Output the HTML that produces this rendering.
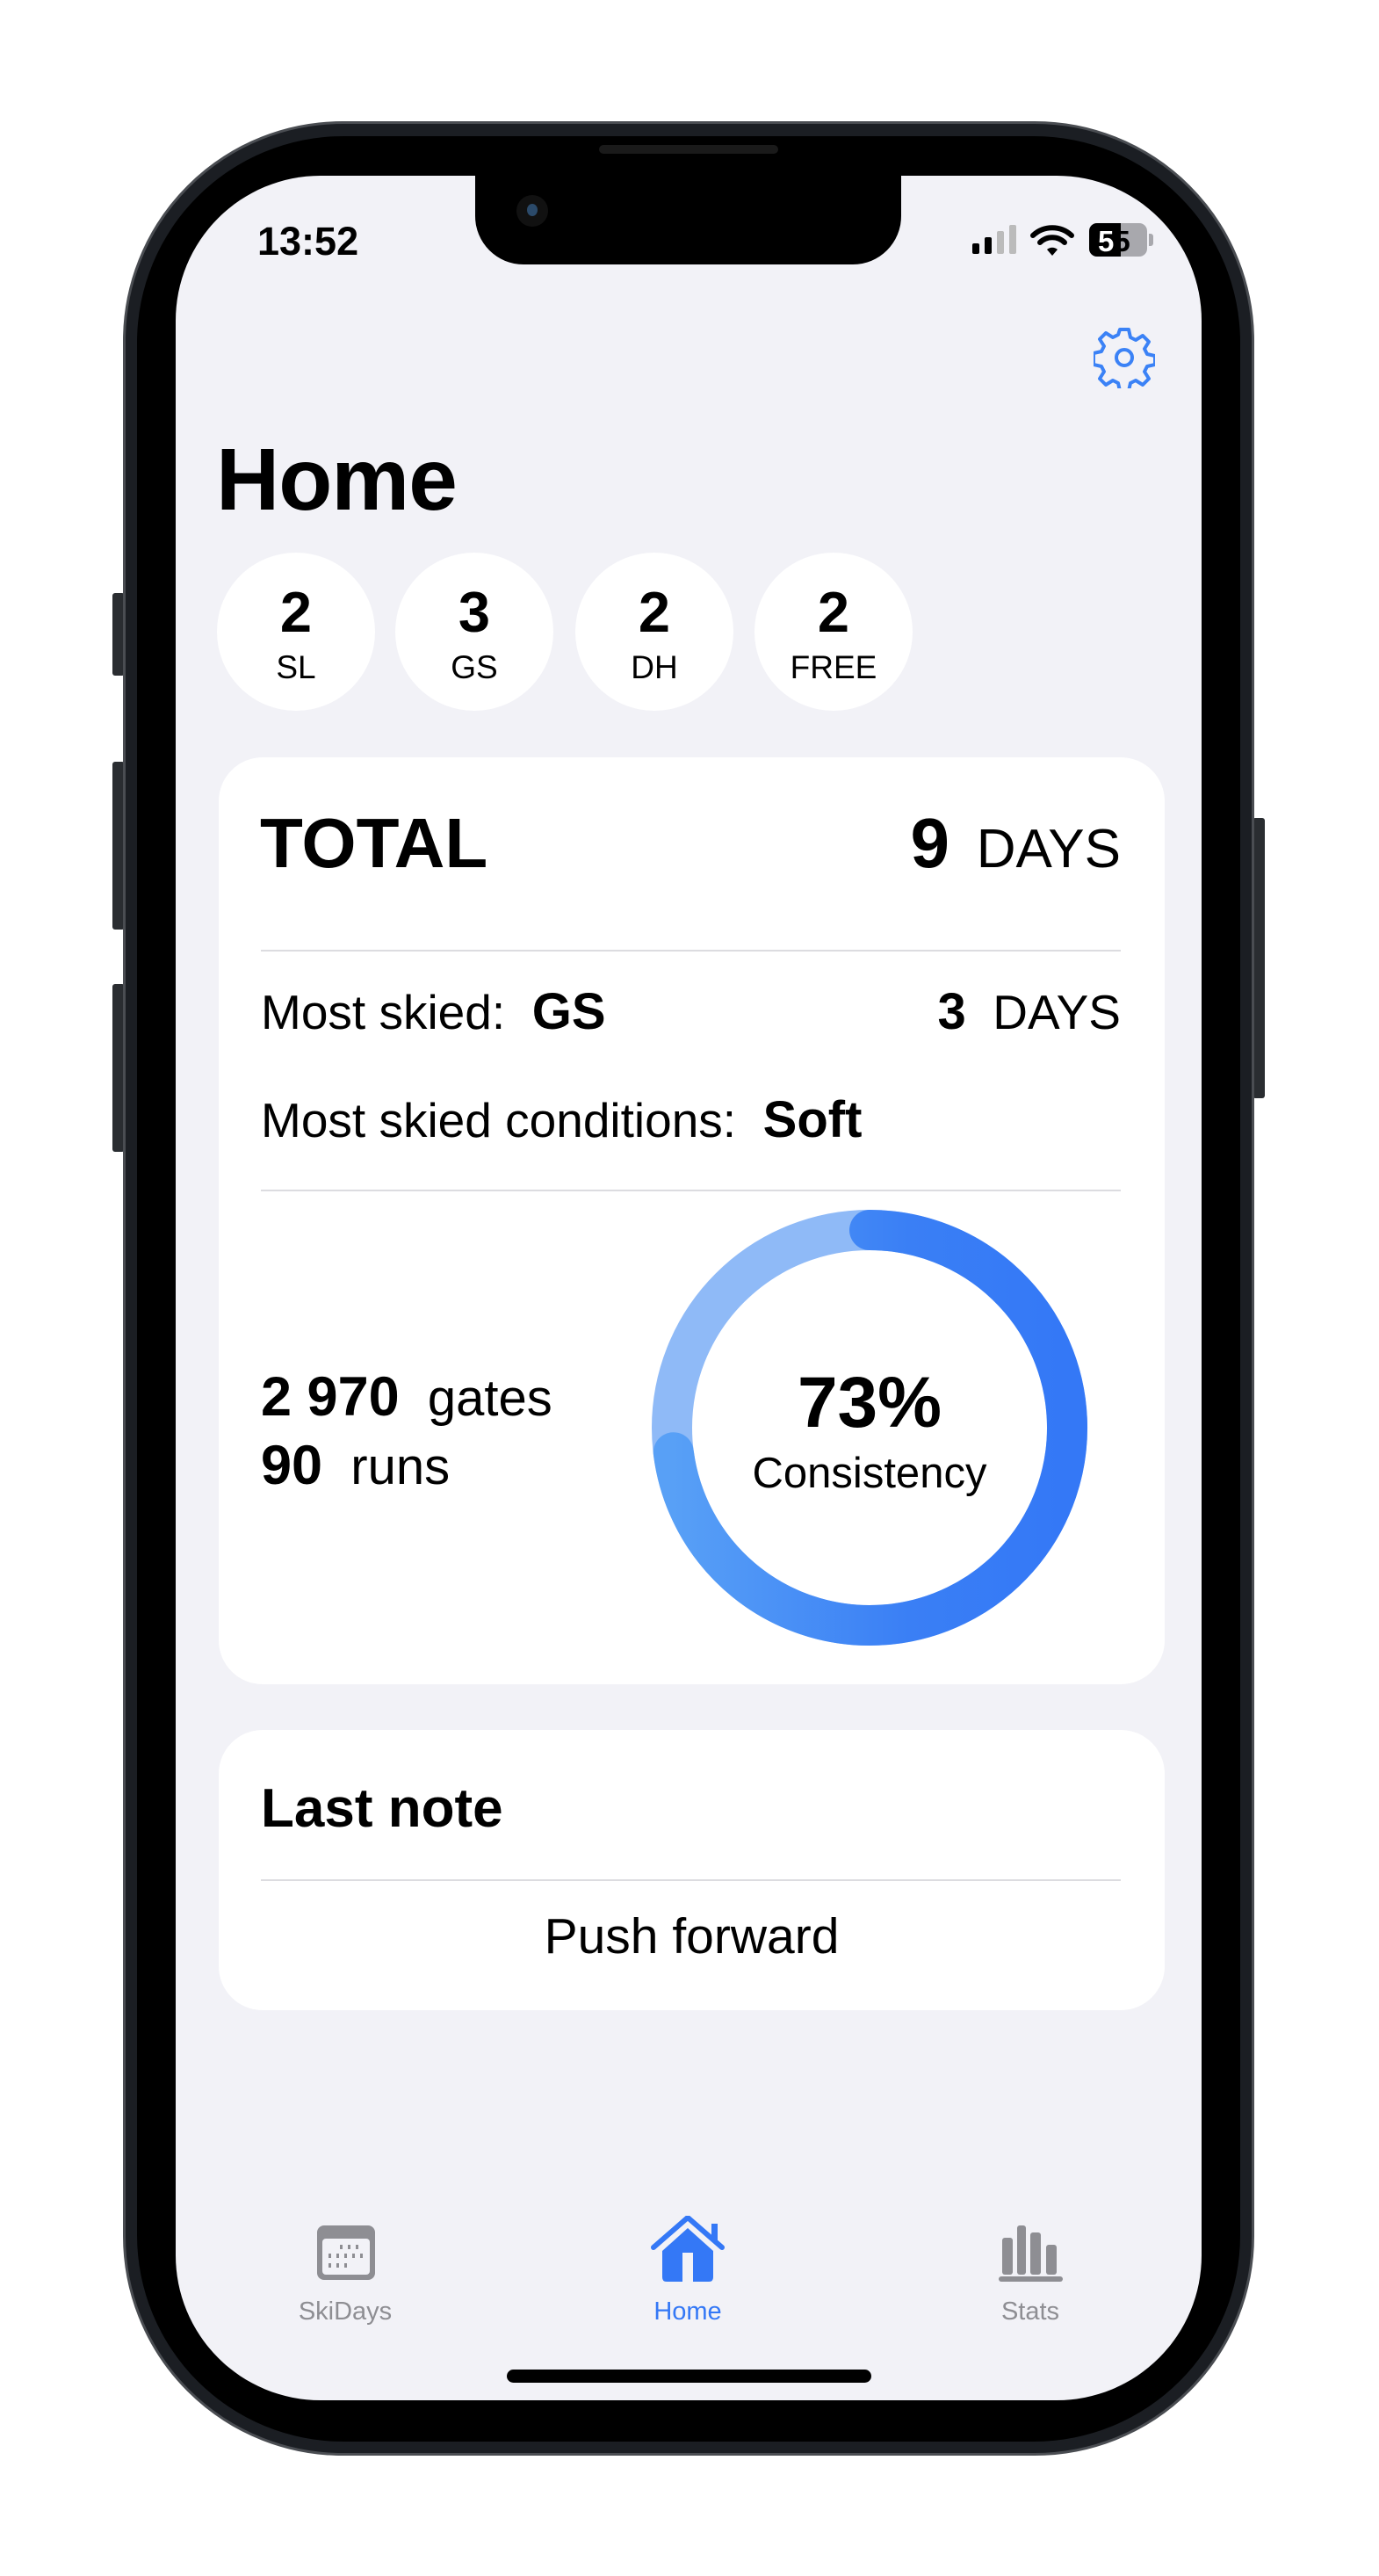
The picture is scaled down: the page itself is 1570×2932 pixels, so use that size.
<!DOCTYPE html>
<html><head><meta charset="utf-8"><style>
*{margin:0;padding:0;box-sizing:border-box}
body{width:1570px;height:2932px;background:#fff;position:relative;overflow:hidden;font-family:"Liberation Sans",sans-serif;color:#000}
.a{position:absolute;white-space:nowrap;line-height:1}
.b{font-weight:bold}
.circ{position:absolute;top:629px;width:180px;height:180px;border-radius:50%;background:#fff}
.hr{position:absolute;left:297px;width:979px;height:2px;background:#dcdce0}
</style></head><body>
<div style="position:absolute;left:128px;top:675px;width:14px;height:94px;background:#2a2d31;border-radius:3px"></div>
<div style="position:absolute;left:128px;top:867px;width:14px;height:191px;background:#2a2d31;border-radius:3px"></div>
<div style="position:absolute;left:128px;top:1120px;width:14px;height:191px;background:#2a2d31;border-radius:3px"></div>
<div style="position:absolute;left:1426px;top:931px;width:14px;height:319px;background:#2a2d31;border-radius:3px"></div>
<div style="position:absolute;left:140px;top:138px;width:1288px;height:2657px;border-radius:250px;background:#1b1e23;border:3px solid #4a4d52"></div>
<div style="position:absolute;left:156px;top:155px;width:1256px;height:2624px;border-radius:235px;background:#000"></div>
<div style="position:absolute;left:200px;top:200px;width:1168px;height:2532px;border-radius:165px;background:#f2f2f7;overflow:hidden">
  <div style="position:absolute;left:341px;top:-10px;width:485px;height:111px;background:#000;border-radius:0 0 55px 55px"></div>
</div>
<div style="position:absolute;left:682px;top:165px;width:204px;height:10px;border-radius:5px;background:#1a1a1a"></div>
<div style="position:absolute;left:588px;top:222px;width:36px;height:36px;border-radius:50%;background:#111"></div>
<div style="position:absolute;left:600px;top:232px;width:12px;height:14px;border-radius:50%;background:#2b4a6a"></div>
<div class="a b" style="left:293px;top:252px;font-size:45px">13:52</div>
<svg style="position:absolute;left:1105px;top:255px" width="56" height="36"><rect x="2" y="22" width="8" height="12" rx="2" fill="#000"/><rect x="16" y="15" width="8" height="19" rx="2" fill="#000"/><rect x="30" y="8" width="8" height="26" rx="2" fill="#bbb"/><rect x="44" y="1" width="8" height="33" rx="2" fill="#bbb"/></svg>
<svg style="position:absolute;left:1172px;top:254px" width="52" height="38" viewBox="0 0 52 38"><path d="M4 14 A32 32 0 0 1 48 14" stroke="#000" stroke-width="6" fill="none" stroke-linecap="round"/><path d="M12 22 A20 20 0 0 1 40 22" stroke="#000" stroke-width="6" fill="none" stroke-linecap="round"/><path d="M20 30 L26 37 L32 30 A9 9 0 0 0 20 30Z" fill="#000"/></svg>
<div style="position:absolute;left:1240px;top:254px;width:66px;height:38px;border-radius:9px;background:#a8a8ad;overflow:hidden"><div style="width:36px;height:38px;background:#000"></div></div>
<div style="position:absolute;left:1308px;top:266px;width:5px;height:14px;border-radius:0 3px 3px 0;background:#a8a8ad"></div>
<div class="a b" style="left:1250px;top:258px;font-size:33px;color:#fff">5<span style="color:#000">5</span></div>
<svg style="position:absolute;left:1245px;top:372px" width="70" height="70" viewBox="0 0 70 70"><path d="M30 3h10l2 9 6 3 8-5 7 7-5 8 3 6 9 2v10l-9 2-3 6 5 8-7 7-8-5-6 3-2 9H30l-2-9-6-3-8 5-7-7 5-8-3-6-9-2V30l9-2 3-6-5-8 7-7 8 5 6-3z" fill="none" stroke="#3b82f6" stroke-width="4" stroke-linejoin="round"/><circle cx="35" cy="35" r="9" fill="none" stroke="#3b82f6" stroke-width="4"/></svg>
<div class="a b" style="left:246px;top:496px;font-size:100px;letter-spacing:-1px">Home</div>
<div class="circ" style="left:247px"></div><div class="circ" style="left:450px"></div><div class="circ" style="left:655px"></div><div class="circ" style="left:859px"></div>
<div class="a b" style="left:247px;width:180px;text-align:center;top:664px;font-size:65px">2</div>
<div class="a b" style="left:450px;width:180px;text-align:center;top:664px;font-size:65px">3</div>
<div class="a b" style="left:655px;width:180px;text-align:center;top:664px;font-size:65px">2</div>
<div class="a b" style="left:859px;width:180px;text-align:center;top:664px;font-size:65px">2</div>
<div class="a" style="left:247px;width:180px;text-align:center;top:741px;font-size:37px">SL</div>
<div class="a" style="left:450px;width:180px;text-align:center;top:741px;font-size:37px">GS</div>
<div class="a" style="left:655px;width:180px;text-align:center;top:741px;font-size:37px">DH</div>
<div class="a" style="left:859px;width:180px;text-align:center;top:741px;font-size:37px">FREE</div>
<div style="position:absolute;left:249px;top:862px;width:1077px;height:1055px;border-radius:50px;background:#fff"></div>
<div class="a b" style="left:296px;top:920px;font-size:80px">TOTAL</div>
<div class="a b" style="right:489px;top:920px;font-size:80px">9</div>
<div class="a" style="right:294px;top:936px;font-size:62px">DAYS</div>
<div class="hr" style="top:1081px"></div>
<div class="a" style="left:297px;top:1123px;font-size:55px">Most skied:&nbsp; <span class="b" style="font-size:58px">GS</span></div>
<div class="a" style="right:294px;top:1123px;font-size:55px"><span class="b" style="font-size:58px">3</span>&nbsp; DAYS</div>
<div class="a" style="left:297px;top:1246px;font-size:55px">Most skied conditions:&nbsp; <span class="b" style="font-size:58px">Soft</span></div>
<div class="hr" style="top:1354px"></div>
<div class="a" style="left:297px;top:1559px;font-size:58px"><span class="b" style="font-size:63px">2 970</span>&nbsp; gates</div>
<div class="a" style="left:297px;top:1637px;font-size:58px"><span class="b" style="font-size:63px">90</span>&nbsp; runs</div>
<svg style="position:absolute;left:740px;top:1375px" width="500" height="500" viewBox="0 0 500 500">
<defs><linearGradient id="g" gradientUnits="userSpaceOnUse" x1="25" y1="0" x2="475" y2="0"><stop offset="0" stop-color="#58a0f6"/><stop offset="0.6" stop-color="#3a7ff5"/><stop offset="1" stop-color="#3478f6"/></linearGradient></defs>
<circle cx="250" cy="250" r="225" fill="none" stroke="#8fbaf7" stroke-width="46"/>
<path d="M250 25 A225 225 0 1 1 26.8 278.2" fill="none" stroke="url(#g)" stroke-width="46" stroke-linecap="round"/>
</svg>
<div class="a b" style="left:740px;width:500px;text-align:center;top:1556px;font-size:82px">73%</div>
<div class="a" style="left:740px;width:500px;text-align:center;top:1653px;font-size:49px">Consistency</div>
<div style="position:absolute;left:249px;top:1969px;width:1077px;height:319px;border-radius:50px;background:#fff"></div>
<div class="a b" style="left:297px;top:2028px;font-size:62px">Last note</div>
<div class="hr" style="top:2139px"></div>
<div class="a" style="left:249px;width:1077px;text-align:center;top:2176px;font-size:57px">Push forward</div>
<svg style="position:absolute;left:359px;top:2531px" width="70" height="66" viewBox="0 0 70 66"><rect x="2" y="2" width="66" height="62" rx="8" fill="#8e8e93"/><rect x="8" y="17" width="54" height="41" rx="4" fill="#f2f2f7"/><g fill="#8e8e93"><rect x="28" y="24" width="3" height="5"/><rect x="37" y="24" width="3" height="5"/><rect x="46" y="24" width="3" height="5"/><rect x="15" y="34" width="3" height="5"/><rect x="24" y="34" width="3" height="5"/><rect x="33" y="34" width="3" height="5"/><rect x="42" y="34" width="3" height="5"/><rect x="51" y="34" width="3" height="5"/><rect x="15" y="45" width="3" height="5"/><rect x="24" y="45" width="3" height="5"/><rect x="33" y="45" width="3" height="5"/></g></svg>
<div class="a" style="left:293px;width:200px;text-align:center;top:2617px;font-size:29px;color:#8e8e93">SkiDays</div>
<svg style="position:absolute;left:740px;top:2522px" width="86" height="76" viewBox="0 0 86 76"><path d="M4 36 L43 2 L82 36" fill="none" stroke="#3478f6" stroke-width="6" stroke-linejoin="round" stroke-linecap="round"/><rect x="70" y="9" width="7" height="20" fill="#3478f6"/><path d="M14 40 L43 14 L72 40 V70 Q72 75 67 75 H19 Q14 75 14 70Z" fill="#3478f6"/><rect x="37" y="42" width="12" height="33" fill="#f2f2f7"/></svg>
<div class="a" style="left:683px;width:200px;text-align:center;top:2617px;font-size:29px;color:#3478f6">Home</div>
<svg style="position:absolute;left:1137px;top:2533px" width="74" height="64" viewBox="0 0 74 64"><g fill="#8e8e93"><rect x="4" y="14" width="12" height="42" rx="3"/><rect x="21" y="0" width="10" height="56" rx="3"/><rect x="36" y="8" width="12" height="48" rx="3"/><rect x="54" y="22" width="12" height="34" rx="3"/><rect x="0" y="58" width="73" height="6" rx="3"/></g></svg>
<div class="a" style="left:1073px;width:200px;text-align:center;top:2617px;font-size:29px;color:#8e8e93">Stats</div>
<div style="position:absolute;left:577px;top:2697px;width:415px;height:15px;border-radius:8px;background:#000"></div>
</body></html>
